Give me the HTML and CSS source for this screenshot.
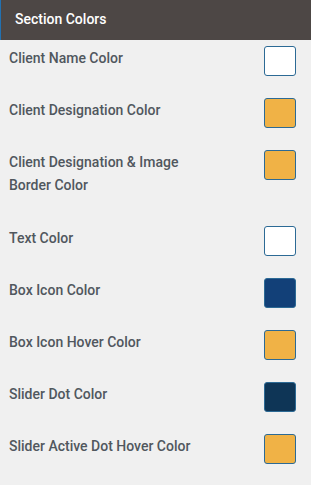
FILE: index.html
```html
<!DOCTYPE html>
<html lang="en">
<head>
  <meta charset="UTF-8">
  <meta name="viewport" content="width=device-width, initial-scale=1.0">
  <title>Section Colors</title>
  <link rel="stylesheet" href="styles.css">
</head>
<body>
  <div id="panel">
    <div class="panel-head">Section Colors</div>
    <div class="panel-body">
      <div class="color-row">
        <label class="color-label">Client Name Color</label>
        <span class="swatch white"></span>
      </div>
      <div class="color-row">
        <label class="color-label">Client Designation Color</label>
        <span class="swatch orange"></span>
      </div>
      <div class="color-row">
        <label class="color-label two-line">Client Designation &amp; Image<br>Border Color</label>
        <span class="swatch orange"></span>
      </div>
      <div class="color-row">
        <label class="color-label">Text Color</label>
        <span class="swatch white"></span>
      </div>
      <div class="color-row">
        <label class="color-label">Box Icon Color</label>
        <span class="swatch blue"></span>
      </div>
      <div class="color-row">
        <label class="color-label">Box Icon Hover Color</label>
        <span class="swatch orange"></span>
      </div>
      <div class="color-row">
        <label class="color-label">Slider Dot Color</label>
        <span class="swatch navy"></span>
      </div>
      <div class="color-row">
        <label class="color-label">Slider Active Dot Hover Color</label>
        <span class="swatch orange"></span>
      </div>
    </div>
  </div>
</body>
</html>
```

FILE: styles.css
```css
body {
  background-color: #f0f0f0;
  color: #50575e;
  font-family: Roboto, "Liberation Sans", Arial, sans-serif;
  margin: 0;
  padding: 0;
}
.panel-head {
  background-color: #4d4745;
  border-left: 1px solid #2271b1;
  color: #fff;
  font-size: 14px;
  font-weight: 500;
  height: 40px;
  line-height: 38px;
  padding-left: 14px;
}
.panel-body {
  padding: 6px 15px 0 9px;
}
.color-row {
  display: flex;
  justify-content: space-between;
  align-items: flex-start;
  margin-bottom: 21px;
}
.color-label {
  font-size: 14px;
  font-weight: 500;
  line-height: 23px;
  padding: 1px 0 7px;
}
.color-label.two-line {
  padding-bottom: 8px;
}
.swatch {
  display: block;
  width: 30px;
  height: 28px;
  border: 1px solid #2c6a95;
  border-radius: 3px;
  flex-shrink: 0;
}
.white {
  background-color: #fff;
}
.orange {
  background-color: #f0b246;
}
.blue {
  background-color: #124078;
}
.navy {
  background-color: #0e3556;
}
```
